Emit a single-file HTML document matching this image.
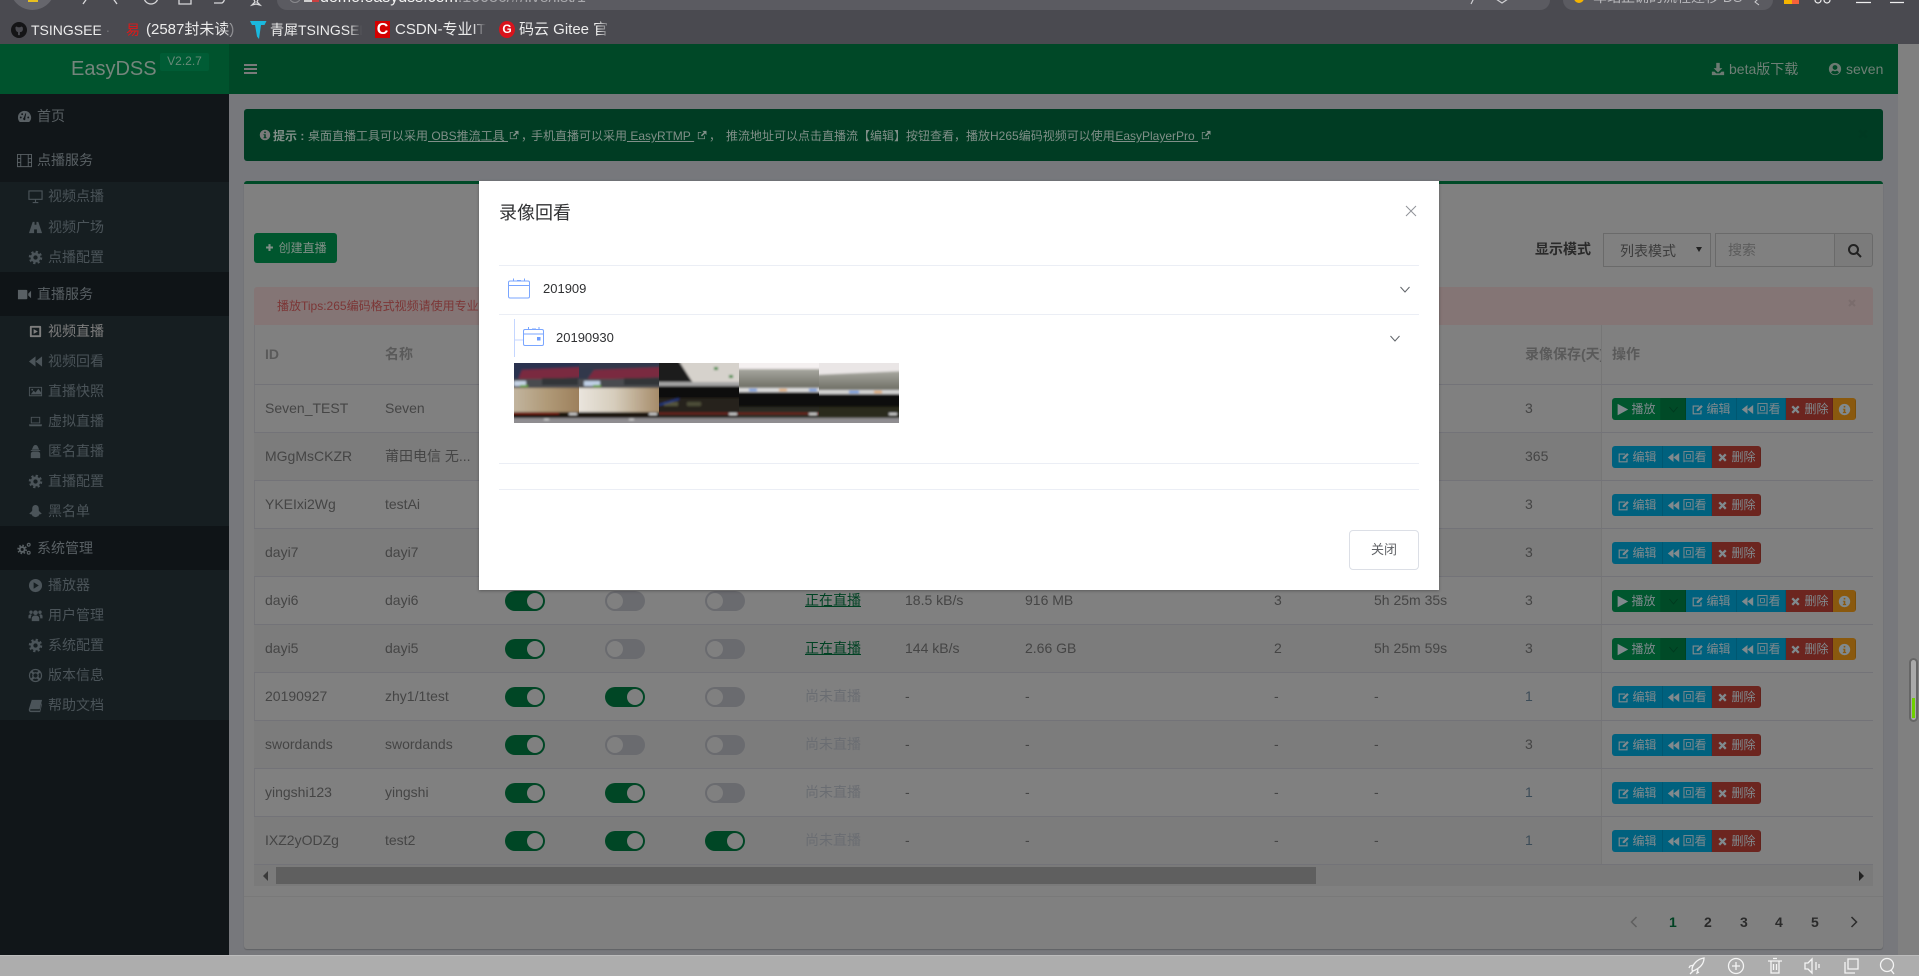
<!DOCTYPE html>
<html lang="zh-CN"><head><meta charset="utf-8"><title>EasyDSS</title>
<style>
*{box-sizing:border-box}
html,body{margin:0;padding:0;width:1919px;height:976px;overflow:hidden;background:#808080;font-family:"Liberation Sans","Noto Sans CJK SC",sans-serif}
.a{position:absolute}
.i{width:14px;height:14px;fill:currentColor;display:inline-block;vertical-align:-2px;flex:none}
#chrome{left:0;top:0;width:1919px;height:44px;background:#4a4a50;overflow:hidden}
.bm{position:absolute;top:20px;height:20px;line-height:20px;font-size:14px;color:#ececec;white-space:nowrap;overflow:hidden;-webkit-mask-image:linear-gradient(90deg,#000 85%,transparent)}
#side{left:0;top:94px;width:229px;height:861px;background:#111619}
.sub{position:absolute;left:0;width:229px;background:#161e21}
.m{position:absolute;white-space:nowrap;font-size:14px;height:30px;line-height:30px}
.m .i{position:absolute;top:8px;width:15px;height:15px}
.t{color:#596064}.s{color:#4b5459}
.r{position:absolute;left:254px;width:1619px;height:48px;border-bottom:1px solid #737378;font-size:14px;color:#454545}
.r.z{background:#7c7c7c}
.c{position:absolute;top:0;line-height:47px;white-space:nowrap}
.tg{position:absolute;top:14px;width:40px;height:20px;border-radius:10px;background:#6a6b6f}
.tg:after{content:"";position:absolute;left:2px;top:2px;width:16px;height:16px;border-radius:50%;background:#808080}
.tg.on{background:#004625}.tg.on:after{left:22px}
.fx{position:absolute;left:1347px;top:0;width:272px;height:47px;background:#808080;border-left:1px solid #767676}
.g{position:absolute;left:10px;top:13px;height:22px;display:flex;border-radius:3px;overflow:hidden;font-size:12px;line-height:22px;color:#808a8e}
.g div{display:flex;align-items:center;justify-content:center;gap:2px;height:22px;border-right:1px solid rgba(0,0,0,.1)}
.g .i{width:13px;height:13px}
.pl{width:49px;background:#00562e}.dd{width:25px;background:#004a27;color:#003a1f}.ed{width:51px;background:#00617e}.bk{width:49px;background:#00617e}.de{width:47px;background:#6c251f}.de2{width:49px;background:#6c251f}.nf{width:23px;background:#8a590e}
.pg{position:absolute;top:912px;font-size:14px;line-height:20px;font-weight:bold;color:#2b2b2b}
.ln{position:absolute;left:499px;width:920px;height:1px;background:#ebeef5}
</style></head><body>
<svg width="0" height="0" style="position:absolute"><defs>
<symbol id="dash" viewBox="0 0 16 16"><path fill-rule="evenodd" d="M8 2a7 7 0 0 0-7 7c0 1.9.7 3.6 2 4.9h10A7 7 0 0 0 8 2zm-4 8a1 1 0 1 1 0-2 1 1 0 0 1 0 2zm1.5-3.5a1 1 0 1 1 0-2 1 1 0 0 1 0 2zM8 12a1.5 1.5 0 0 1-.7-2.8L9 4.5l.8.3-1 5A1.5 1.5 0 0 1 8 12zm4-2a1 1 0 1 1 0-2 1 1 0 0 1 0 2z"/></symbol>
<symbol id="film" viewBox="0 0 16 16"><path fill="none" stroke="currentColor" d="M.5 1.5h15v13H.5zM4 1.5v13M12 1.5v13M.5 6h3.500M.5 10h3.500M12 6h3.500M12 10h3.500"/></symbol>
<symbol id="desk" viewBox="0 0 16 16"><path fill="none" stroke="currentColor" stroke-width="1.2" d="M1 2h14v9H1zM8 11v3M5 14.400h6"/></symbol>
<symbol id="road" viewBox="0 0 16 16"><path d="M5 2h2v3h2V2h2l4 12H9.500v-4h-3v4H1z"/></symbol>
<symbol id="cog" viewBox="0 0 16 16"><circle cx="8" cy="8" r="3.800" fill="none" stroke="currentColor" stroke-width="3"/><circle cx="8" cy="8" r="6" fill="none" stroke="currentColor" stroke-width="2.400" stroke-dasharray="2.400 2.310"/></symbol>
<symbol id="vid" viewBox="0 0 16 16"><path d="M1 3h9a1 1 0 0 1 1 1v8a1 1 0 0 1-1 1H1zM12 7l3-3v8l-3-3z"/></symbol>
<symbol id="psq" viewBox="0 0 16 16"><path fill-rule="evenodd" d="M3 2h10a1 1 0 0 1 1 1v10a1 1 0 0 1-1 1H3a1 1 0 0 1-1-1V3a1 1 0 0 1 1-1zm1 2v8h8V4zM6 5.500l4.500 2.500L6 10.500z"/></symbol>
<symbol id="bk" viewBox="0 0 16 16"><path d="M8 2.500v11L1 8zM15 2.500v11L8 8z"/></symbol>
<symbol id="img" viewBox="0 0 16 16"><path fill-rule="evenodd" d="M1 3h14v10H1zm1 1v8h12V4z"/><path d="M3 11l3-4 2 2 3-4 3 4v2zM4.500 5a1 1 0 1 1 0 2 1 1 0 0 1 0-2z"/></symbol>
<symbol id="lap" viewBox="0 0 16 16"><path fill-rule="evenodd" d="M3 3h10v7H3zm1 1v5h8V4zM1 11h14l-.5 2h-13z"/></symbol>
<symbol id="sec" viewBox="0 0 16 16"><path d="M8 1c1.500 0 2.500 1 3 3l1 2H4l1-2c.5-2 1.500-3 3-3zM3 6.500h10v1H3zM5 8h6a3 3 0 0 1 2 3v4H3v-4a3 3 0 0 1 2-3z"/></symbol>
<symbol id="gh" viewBox="0 0 16 16"><path d="M8 1c2.500 0 3.500 2 3.500 4v2c1 1.500 2 2 3 3 0 .8-1.500 1-2.500 1.200L11 13c-1 0-2 1-3 1s-2-1-3-1l-1-1.800C3 11 1.500 10.800 1.500 10c1-1 2-1.500 3-3V5c0-2 1-4 3.500-4z"/></symbol>
<symbol id="cogs" viewBox="0 0 16 16"><circle cx="5.500" cy="9" r="2.600" fill="none" stroke="currentColor" stroke-width="2"/><circle cx="5.500" cy="9" r="4.300" fill="none" stroke="currentColor" stroke-width="1.800" stroke-dasharray="1.700 1.680"/><circle cx="12.500" cy="4" r="1.500" fill="none" stroke="currentColor" stroke-width="1.300"/><circle cx="12.500" cy="12.500" r="1.500" fill="none" stroke="currentColor" stroke-width="1.300"/></symbol>
<symbol id="pc" viewBox="0 0 16 16"><path fill-rule="evenodd" d="M8 1a7 7 0 1 1 0 14A7 7 0 0 1 8 1zM6 4.500v7l5.500-3.500z"/></symbol>
<symbol id="us" viewBox="0 0 16 16"><circle cx="8" cy="5" r="2.500"/><circle cx="3.200" cy="4.500" r="1.800"/><circle cx="12.800" cy="4.500" r="1.800"/><path d="M4 14v-3c0-2 2-3 4-3s4 1 4 3v3zM.5 11V8.500c0-1 1-1.800 2.500-1.800l1 .7C3 8.500 3 9.500 3 11zM15.500 11V8.500c0-1-1-1.800-2.500-1.800l-1 .7c1 1.100 1 2.100 1 3.600z"/></symbol>
<symbol id="life" viewBox="0 0 16 16"><circle cx="8" cy="8" r="6.400" fill="none" stroke="currentColor" stroke-width="1.300"/><circle cx="8" cy="8" r="2.900" fill="none" stroke="currentColor" stroke-width="1.300"/><path fill="none" stroke="currentColor" stroke-width="2.400" d="M3.500 3.500l2.500 2.500M12.500 3.500L10 6M3.500 12.500L6 10M12.500 12.500L10 10"/></symbol>
<symbol id="book" viewBox="0 0 16 16"><path d="M4 2h11l-2.500 10H3c-.8 0-1 1.500 0 1.500h9.500l2-8 .5 1-2 8.500H3c-2 0-2.500-2-2-3.500z"/></symbol>
<symbol id="inf" viewBox="0 0 16 16"><path fill-rule="evenodd" d="M8 1a7 7 0 1 1 0 14A7 7 0 0 1 8 1zM7 3.500v2h2v-2zM6 7v1.200h1v2.800H6v1.400h4V11H9V7z"/></symbol>
<symbol id="edt" viewBox="0 0 16 16"><path d="M2 3h8v1.400H3.400v8.200h8.200V9H13v5H2zM7 8l5.500-5.500 2 2L9 10H7z"/></symbol>
<symbol id="x" viewBox="0 0 16 16"><path d="M3 5l2-2 3 3 3-3 2 2-3 3 3 3-2 2-3-3-3 3-2-2 3-3z"/></symbol>
<symbol id="dl" viewBox="0 0 16 16"><path d="M6 1h4v6h3l-5 5-5-5h3zM1 11h3l2 2h4l2-2h3v4H1z"/></symbol>
<symbol id="uc" viewBox="0 0 16 16"><path fill-rule="evenodd" d="M8 1a7 7 0 1 1 0 14A7 7 0 0 1 8 1zm0 2.500A2.700 2.700 0 1 0 8 9a2.700 2.700 0 0 0 0-5.500zM3.500 12a5.800 5.800 0 0 0 9 0c-.5-1.500-2-2.200-2.500-2.200a3.400 3.400 0 0 1-4 0c-.5 0-2 .7-2.500 2.200z"/></symbol>
<symbol id="pls" viewBox="0 0 16 16"><path d="M6.500 3h3v3.500H13v3H9.500V13h-3V9.500H3v-3h3.500z"/></symbol>
<symbol id="ext" viewBox="0 0 16 16"><path d="M11 9v3.500H3.500V5H7V4H2.500v9.500H12V9zM8.500 2.500H14V8l-2-2-4 4-1.500-1.500 4-4z"/></symbol>
<symbol id="tri" viewBox="0 0 16 16"><path d="M2 1l13 7-13 7z"/></symbol>
<symbol id="chv" viewBox="0 0 16 16"><path fill="none" stroke="currentColor" d="M3 5l5 6 5-6"/></symbol>
</defs></svg>

<!-- browser chrome -->
<div class="a" id="chrome">
 <div class="a" style="left:10px;top:-35px;width:45px;height:45px;border-radius:50%;background:#66666c"></div>
 <div class="a" style="left:28px;top:-2px;width:10px;height:4px;background:#e8c020"></div>
 <svg class="a" style="left:75px;top:0" width="200" height="12" fill="none" stroke="#d8d8da" stroke-width="1.300">
  <path d="M13 -3L8 4M37 -3L42 4"/><circle cx="76" cy="-3" r="7"/><path d="M104 -3v7h12v-7M139 3h8a4 4 0 0 0 2-5M178 -3l2 5 -3 3 4-1 4 1-3-3 2-5"/></svg>
 <div class="a" style="left:277px;top:-10px;width:1273px;height:20px;border-radius:10px;background:#5b5b61;overflow:hidden">
  <svg class="a" style="left:12px;top:4px" width="14" height="12" fill="none" stroke="#8a8a8e"><circle cx="6" cy="3" r="5.500"/></svg>
  <div class="a" style="left:27px;top:6px;width:8px;height:6px;background:#cfcfcf"></div>
  <div class="a" style="left:35px;top:6px;width:7px;height:6px;background:#c84040"></div>
  <div class="a" style="left:43px;top:0;font-size:16px;line-height:16px;color:#f4f4f4;white-space:nowrap">demo.easydss.com<span style="color:#a8a8ac">:10086/#/live/list/1</span></div>
 </div>
 <svg class="a" style="left:1468px;top:0" width="44" height="6" fill="none" stroke="#cfcfd2" stroke-width="1.200"><path d="M6 -2L3 4M28 -1l6 4 6-4"/></svg>
 <div class="a" style="left:1563px;top:-10px;width:210px;height:20px;border-radius:10px;background:#5b5b61;overflow:hidden">
  <div class="a" style="left:11px;top:6px;width:10px;height:7px;border-radius:0 0 5px 5px;background:#f5b400"></div>
  <div class="a" style="left:30px;top:0;width:150px;font-size:14px;line-height:15px;color:#b8b8bc;white-space:nowrap;overflow:hidden">车站正确的流程迁移 DSS</div>
  <svg class="a" style="left:190px;top:8px" width="10" height="8" fill="none" stroke="#cfcfd2"><path d="M6 0L2 4l4 3"/></svg>
 </div>
 <div class="a" style="left:1784px;top:0;width:8px;height:4px;background:#f5b400"></div>
 <div class="a" style="left:1792px;top:0;width:7px;height:4px;background:#f5613a"></div>
 <svg class="a" style="left:1810px;top:0" width="100" height="6" fill="none" stroke="#eee" stroke-width="1.200"><circle cx="8" cy="0" r="3"/><circle cx="17" cy="0" r="3"/><path d="M46 2.500h15M80 2.500h14"/></svg>
 <svg class="a" style="left:10px;top:21px" width="18" height="18"><circle cx="9" cy="9" r="8" fill="#141416"/><path d="M5.500 6l1.300-.5 1 .8h2.400l1-.8 1.300.5c.7 1.500.6 3.500-.6 4.500-.5.4-1.200.6-2 .6v3H8v-3c-1.700-.3-2.800-2.500-2.500-5z" fill="#4a4a50"/></svg>
 <div class="bm" style="left:31px;width:80px">TSINGSEE ·</div>
 <div class="bm" style="left:126px;width:18px;color:#e01818;font-size:14px;-webkit-mask-image:none">易</div>
 <div class="bm" style="left:146px;width:92px;font-size:15px">(2587封未读)</div>
 <svg class="a" style="left:250px;top:20px" width="17" height="20"><path d="M0 1h16.500l-2 4h-3.500l-2 14-2-2.500L5 5H2z" fill="#1ab8de"/></svg>
 <div class="bm" style="left:270px;width:92px">青犀TSINGSEE</div>
 <div class="a" style="left:375px;top:21px;width:15px;height:17px;background:#d40000;color:#fff;font:bold 16px/17px 'Liberation Sans',sans-serif;text-align:center">C</div>
 <div class="bm" style="left:395px;width:91px;font-size:15px">CSDN-专业IT</div>
 <div class="a" style="left:499px;top:21px;width:16px;height:17px;border-radius:50%;background:#d8131c;color:#fff;font:bold 12px/17px 'Liberation Sans',sans-serif;text-align:center">G</div>
 <div class="bm" style="left:519px;width:92px;font-size:15px">码云 Gitee 官</div>
</div>

<!-- header -->
<div class="a" style="left:0;top:44px;width:229px;height:50px;background:#00532d"></div>
<div class="a" style="left:229px;top:44px;width:1669px;height:50px;background:#004827"></div>
<div class="a" style="left:71px;top:57px;font-size:20px;line-height:24px;color:#75857c">EasyDSS</div>
<div class="a" style="left:160px;top:53px;width:49px;height:18px;border-radius:2px;background:#005c35;color:#688a78;font-size:12px;line-height:16px;text-align:center">V2.2.7</div>
<div class="a" style="left:244px;top:64px;width:13px;height:2px;background:#7a7a7a"></div>
<div class="a" style="left:244px;top:68px;width:13px;height:2px;background:#7a7a7a"></div>
<div class="a" style="left:244px;top:72px;width:13px;height:2px;background:#7a7a7a"></div>
<svg class="i a" style="left:1711px;top:62px;color:#6c7a72"><use href="#dl"/></svg>
<div class="a" style="left:1729px;top:60px;font-size:14px;line-height:18px;color:#6f7f76">beta版下载</div>
<svg class="i a" style="left:1828px;top:62px;color:#6c7a72"><use href="#uc"/></svg>
<div class="a" style="left:1846px;top:60px;font-size:14px;line-height:18px;color:#6f7f76">seven</div>

<!-- sidebar -->
<div class="a" id="side">
 <div class="sub" style="top:88px;height:90px"></div>
 <div class="sub" style="top:222px;height:210px"></div>
 <div class="sub" style="top:476px;height:150px"></div>
 <div class="a" style="left:0;top:0;width:229px;height:88px;background:#111619"></div>
 <div class="a" style="left:0;top:178px;width:229px;height:44px;background:#0f1417"></div>
 <div class="a" style="left:0;top:432px;width:229px;height:44px;background:#0f1417"></div>
</div>
<div class="a" style="left:0;top:0">
<div class="m t" style="left:37px;top:101px"><svg class="i" style="left:-20px"><use href="#dash"/></svg>首页</div>
<div class="m t" style="left:37px;top:145px"><svg class="i" style="left:-20px"><use href="#film"/></svg>点播服务</div>
<div class="m s" style="left:48px;top:181px"><svg class="i" style="left:-20px"><use href="#desk"/></svg>视频点播</div>
<div class="m s" style="left:48px;top:212px"><svg class="i" style="left:-20px"><use href="#road"/></svg>视频广场</div>
<div class="m s" style="left:48px;top:242px"><svg class="i" style="left:-20px"><use href="#cog"/></svg>点播配置</div>
<div class="m t" style="left:37px;top:279px"><svg class="i" style="left:-20px"><use href="#vid"/></svg>直播服务</div>
<div class="m" style="left:48px;top:316px;color:#7e7e7e"><svg class="i" style="left:-20px"><use href="#psq"/></svg>视频直播</div>
<div class="m s" style="left:48px;top:346px"><svg class="i" style="left:-20px"><use href="#bk"/></svg>视频回看</div>
<div class="m s" style="left:48px;top:376px"><svg class="i" style="left:-20px"><use href="#img"/></svg>直播快照</div>
<div class="m s" style="left:48px;top:406px"><svg class="i" style="left:-20px"><use href="#lap"/></svg>虚拟直播</div>
<div class="m s" style="left:48px;top:436px"><svg class="i" style="left:-20px"><use href="#sec"/></svg>匿名直播</div>
<div class="m s" style="left:48px;top:466px"><svg class="i" style="left:-20px"><use href="#cog"/></svg>直播配置</div>
<div class="m s" style="left:48px;top:496px"><svg class="i" style="left:-20px"><use href="#gh"/></svg>黑名单</div>
<div class="m t" style="left:37px;top:533px"><svg class="i" style="left:-20px"><use href="#cogs"/></svg>系统管理</div>
<div class="m s" style="left:48px;top:570px"><svg class="i" style="left:-20px"><use href="#pc"/></svg>播放器</div>
<div class="m s" style="left:48px;top:600px"><svg class="i" style="left:-20px"><use href="#us"/></svg>用户管理</div>
<div class="m s" style="left:48px;top:630px"><svg class="i" style="left:-20px"><use href="#cog"/></svg>系统配置</div>
<div class="m s" style="left:48px;top:660px"><svg class="i" style="left:-20px"><use href="#life"/></svg>版本信息</div>
<div class="m s" style="left:48px;top:690px"><svg class="i" style="left:-20px"><use href="#book"/></svg>帮助文档</div>
</div>

<!-- content background -->
<div class="a" style="left:229px;top:94px;width:1669px;height:861px;background:#77787c"></div>
<div class="a" style="left:1898px;top:44px;width:21px;height:911px;background:#808080"></div>
<div class="a" style="left:1909px;top:658px;width:9px;height:64px;border:2px solid #666;border-radius:5px;background:#aaa"></div>
<div class="a" style="left:1912px;top:698px;width:3px;height:20px;background:#6fd000"></div>

<!-- alert -->
<div class="a" style="left:244px;top:109px;width:1639px;height:52px;border-radius:3px;background:#003c23"></div>
<div class="a" style="left:0;top:127px;font-size:12px;line-height:18px;color:#808f88;white-space:nowrap">
 <svg class="i a" style="left:259px;top:2px;width:12px;height:12px;color:#7a7a7a"><use href="#inf"/></svg>
 <b class="a" style="left:273px;top:0;white-space:nowrap">提示 :</b>
 <span class="a" style="left:308px;top:0">桌面直播工具可以采用</span>
 <u class="a" style="left:428px;top:0">&nbsp;OBS推流工具&nbsp;</u>
 <svg class="i a" style="left:508px;top:2px;width:12px;height:12px"><use href="#ext"/></svg>
 <span class="a" style="left:521px;top:0">，</span>
 <span class="a" style="left:531px;top:0">手机直播可以采用</span>
 <u class="a" style="left:627px;top:0">&nbsp;EasyRTMP&nbsp;</u>
 <svg class="i a" style="left:696px;top:2px;width:12px;height:12px"><use href="#ext"/></svg>
 <span class="a" style="left:709px;top:0">，</span>
 <span class="a" style="left:726px;top:0">推流地址可以点击直播流【编辑】按钮查看，</span>
 <span class="a" style="left:966px;top:0">播放H265编码视频可以使用</span>
 <u class="a" style="left:1112px;top:0">&nbsp;EasyPlayerPro&nbsp;</u>
 <svg class="i a" style="left:1200px;top:2px;width:12px;height:12px"><use href="#ext"/></svg>
</div>
<svg class="i a" style="left:1856px;top:127px;color:#003a22"><use href="#x"/></svg>

<!-- box -->
<div class="a" style="left:244px;top:181px;width:1639px;height:768px;background:#808080;border-top:3px solid #004a27;border-radius:3px;box-shadow:0 1px 1px rgba(0,0,0,.2)"></div>
<div class="a" style="left:254px;top:233px;width:83px;height:30px;border-radius:3px;background:#00562e;color:#829088;font-size:12px;line-height:30px;text-align:center"><svg class="i" style="width:11px;height:11px;vertical-align:-1px"><use href="#pls"/></svg> 创建直播</div>
<div class="a" style="left:1535px;top:239px;font-size:14px;line-height:20px;font-weight:bold;color:#2a2a2a">显示模式</div>
<div class="a" style="left:1603px;top:233px;width:108px;height:34px;border:1px solid #6a6a6a;background:#808080;color:#3c3c3c;font-size:14px;line-height:34px;padding-left:16px">列表模式</div>
<div class="a" style="left:1696px;top:247px;width:0;height:0;border:3px solid transparent;border-top:5px solid #222"></div>
<div class="a" style="left:1715px;top:233px;width:120px;height:34px;border:1px solid #6a6a6a;color:#5c5c5c;font-size:14px;line-height:32px;padding-left:12px">搜索</div>
<div class="a" style="left:1835px;top:233px;width:38px;height:34px;border:1px solid #6a6a6a;border-left:0;background:#7b7b7b;border-radius:0 3px 3px 0"></div>
<svg class="a" style="left:1847px;top:243px" width="15" height="15" fill="none" stroke="#222" stroke-width="2"><circle cx="6.500" cy="6.500" r="4.500"/><path d="M10 10l4 4"/></svg>
<div class="a" style="left:254px;top:287px;width:1619px;height:38px;border-radius:3px 3px 0 0;background:#847575"></div>
<div class="a" style="left:277px;top:298px;font-size:12px;line-height:16px;color:#7c3636;white-space:nowrap">播放Tips:265编码格式视频请使用专业版</div>
<svg class="i a" style="left:1846px;top:297px;width:12px;height:12px;color:#7a6c6c"><use href="#x"/></svg>

<!-- table -->
<div class="a" style="left:254px;top:325px;width:1619px;height:60px;border:1px solid #767679;border-bottom:1px solid #737378;border-top:0;background:#808080;font-size:14px;font-weight:bold;color:#5a5a5a;line-height:58px">
 <span class="a" style="left:10px;top:0">ID</span><span class="a" style="left:130px;top:0">名称</span>
 <span class="a" style="left:1270px;top:0;width:76px;overflow:hidden;white-space:nowrap">录像保存(天)</span>
 <div class="a" style="left:1346px;top:0;width:272px;height:59px;border-left:1px solid #767676;padding-left:10px;background:#808080">操作</div>
</div>
<div class="a" style="left:254px;top:385px;width:1px;height:480px;background:#767679"></div>
<div class="a" style="left:1872px;top:385px;width:1px;height:480px;background:#767679"></div>

<div class="r" style="top:385px"><span class="c" style="left:11px">Seven_TEST</span><span class="c" style="left:131px">Seven</span><span class="c" style="left:1271px">3</span>
 <div class="fx"><div class="g"><div class="pl"><svg class="i"><use href="#tri"/></svg>播放</div><div class="dd"><svg class="i"><use href="#chv"/></svg></div><div class="ed"><svg class="i"><use href="#edt"/></svg>编辑</div><div class="bk"><svg class="i"><use href="#bk"/></svg>回看</div><div class="de"><svg class="i"><use href="#x"/></svg>删除</div><div class="nf"><svg class="i"><use href="#inf"/></svg></div></div></div></div>
<div class="r z" style="top:433px"><span class="c" style="left:11px">MGgMsCKZR</span><span class="c" style="left:131px">莆田电信 无...</span><span class="c" style="left:1271px">365</span>
 <div class="fx"><div class="g"><div class="ed"><svg class="i"><use href="#edt"/></svg>编辑</div><div class="bk"><svg class="i"><use href="#bk"/></svg>回看</div><div class="de2"><svg class="i"><use href="#x"/></svg>删除</div></div></div></div>
<div class="r" style="top:481px"><span class="c" style="left:11px">YKEIxi2Wg</span><span class="c" style="left:131px">testAi</span><span class="c" style="left:1271px">3</span>
 <div class="fx"><div class="g"><div class="ed"><svg class="i"><use href="#edt"/></svg>编辑</div><div class="bk"><svg class="i"><use href="#bk"/></svg>回看</div><div class="de2"><svg class="i"><use href="#x"/></svg>删除</div></div></div></div>
<div class="r z" style="top:529px"><span class="c" style="left:11px">dayi7</span><span class="c" style="left:131px">dayi7</span><span class="c" style="left:1271px">3</span>
 <div class="fx"><div class="g"><div class="ed"><svg class="i"><use href="#edt"/></svg>编辑</div><div class="bk"><svg class="i"><use href="#bk"/></svg>回看</div><div class="de2"><svg class="i"><use href="#x"/></svg>删除</div></div></div></div>
<div class="r" style="top:577px"><span class="c" style="left:11px">dayi6</span><span class="c" style="left:131px">dayi6</span><span class="tg on" style="left:251px"></span><span class="tg" style="left:351px"></span><span class="tg" style="left:451px"></span><u class="c" style="left:551px;color:#004223">正在直播</u><span class="c" style="left:651px">18.5 kB/s</span><span class="c" style="left:771px">916 MB</span><span class="c" style="left:1020px">3</span><span class="c" style="left:1120px">5h 25m 35s</span><span class="c" style="left:1271px">3</span>
 <div class="fx"><div class="g"><div class="pl"><svg class="i"><use href="#tri"/></svg>播放</div><div class="dd"><svg class="i"><use href="#chv"/></svg></div><div class="ed"><svg class="i"><use href="#edt"/></svg>编辑</div><div class="bk"><svg class="i"><use href="#bk"/></svg>回看</div><div class="de"><svg class="i"><use href="#x"/></svg>删除</div><div class="nf"><svg class="i"><use href="#inf"/></svg></div></div></div></div>
<div class="r z" style="top:625px"><span class="c" style="left:11px">dayi5</span><span class="c" style="left:131px">dayi5</span><span class="tg on" style="left:251px"></span><span class="tg" style="left:351px"></span><span class="tg" style="left:451px"></span><u class="c" style="left:551px;color:#004223">正在直播</u><span class="c" style="left:651px">144 kB/s</span><span class="c" style="left:771px">2.66 GB</span><span class="c" style="left:1020px">2</span><span class="c" style="left:1120px">5h 25m 59s</span><span class="c" style="left:1271px">3</span>
 <div class="fx"><div class="g"><div class="pl"><svg class="i"><use href="#tri"/></svg>播放</div><div class="dd"><svg class="i"><use href="#chv"/></svg></div><div class="ed"><svg class="i"><use href="#edt"/></svg>编辑</div><div class="bk"><svg class="i"><use href="#bk"/></svg>回看</div><div class="de"><svg class="i"><use href="#x"/></svg>删除</div><div class="nf"><svg class="i"><use href="#inf"/></svg></div></div></div></div>
<div class="r" style="top:673px"><span class="c" style="left:11px">20190927</span><span class="c" style="left:131px">zhy1/1test</span><span class="tg on" style="left:251px"></span><span class="tg on" style="left:351px"></span><span class="tg" style="left:451px"></span><span class="c" style="left:551px;color:#6a6d72">尚未直播</span><span class="c" style="left:651px">-</span><span class="c" style="left:771px">-</span><span class="c" style="left:1020px">-</span><span class="c" style="left:1120px">-</span><span class="c" style="left:1271px;color:#3c4c58">1</span>
 <div class="fx"><div class="g"><div class="ed"><svg class="i"><use href="#edt"/></svg>编辑</div><div class="bk"><svg class="i"><use href="#bk"/></svg>回看</div><div class="de2"><svg class="i"><use href="#x"/></svg>删除</div></div></div></div>
<div class="r z" style="top:721px"><span class="c" style="left:11px">swordands</span><span class="c" style="left:131px">swordands</span><span class="tg on" style="left:251px"></span><span class="tg" style="left:351px"></span><span class="tg" style="left:451px"></span><span class="c" style="left:551px;color:#6a6d72">尚未直播</span><span class="c" style="left:651px">-</span><span class="c" style="left:771px">-</span><span class="c" style="left:1020px">-</span><span class="c" style="left:1120px">-</span><span class="c" style="left:1271px">3</span>
 <div class="fx"><div class="g"><div class="ed"><svg class="i"><use href="#edt"/></svg>编辑</div><div class="bk"><svg class="i"><use href="#bk"/></svg>回看</div><div class="de2"><svg class="i"><use href="#x"/></svg>删除</div></div></div></div>
<div class="r" style="top:769px"><span class="c" style="left:11px">yingshi123</span><span class="c" style="left:131px">yingshi</span><span class="tg on" style="left:251px"></span><span class="tg on" style="left:351px"></span><span class="tg" style="left:451px"></span><span class="c" style="left:551px;color:#6a6d72">尚未直播</span><span class="c" style="left:651px">-</span><span class="c" style="left:771px">-</span><span class="c" style="left:1020px">-</span><span class="c" style="left:1120px">-</span><span class="c" style="left:1271px;color:#3c4c58">1</span>
 <div class="fx"><div class="g"><div class="ed"><svg class="i"><use href="#edt"/></svg>编辑</div><div class="bk"><svg class="i"><use href="#bk"/></svg>回看</div><div class="de2"><svg class="i"><use href="#x"/></svg>删除</div></div></div></div>
<div class="r z" style="top:817px"><span class="c" style="left:11px">IXZ2yODZg</span><span class="c" style="left:131px">test2</span><span class="tg on" style="left:251px"></span><span class="tg on" style="left:351px"></span><span class="tg on" style="left:451px"></span><span class="c" style="left:551px;color:#6a6d72">尚未直播</span><span class="c" style="left:651px">-</span><span class="c" style="left:771px">-</span><span class="c" style="left:1020px">-</span><span class="c" style="left:1120px">-</span><span class="c" style="left:1271px;color:#3c4c58">1</span>
 <div class="fx"><div class="g"><div class="ed"><svg class="i"><use href="#edt"/></svg>编辑</div><div class="bk"><svg class="i"><use href="#bk"/></svg>回看</div><div class="de2"><svg class="i"><use href="#x"/></svg>删除</div></div></div></div>

<!-- h-scroll -->
<div class="a" style="left:254px;top:865px;width:1619px;height:21px;background:#7a7a7a"></div>
<div class="a" style="left:276px;top:867px;width:1040px;height:17px;background:#5f5f5f"></div>
<div class="a" style="left:263px;top:871px;width:0;height:0;border:5px solid transparent;border-left:0;border-right:5px solid #3a3a3a"></div>
<div class="a" style="left:1859px;top:871px;width:0;height:0;border:5px solid transparent;border-right:0;border-left:5px solid #222"></div>
<div class="a" style="left:244px;top:896px;width:1639px;height:1px;background:#797979"></div>

<!-- pager -->
<svg class="a" style="left:1630px;top:915px" width="8" height="14" fill="none" stroke="#5f5f5f" stroke-width="1.500"><path d="M6.500 2L1.500 7l5 5"/></svg>
<span class="pg" style="left:1669px;color:#004223">1</span><span class="pg" style="left:1704px">2</span><span class="pg" style="left:1740px">3</span><span class="pg" style="left:1775px">4</span><span class="pg" style="left:1811px">5</span>
<svg class="a" style="left:1850px;top:915px" width="8" height="14" fill="none" stroke="#2b2b2b" stroke-width="1.500"><path d="M1.500 2l5 5-5 5"/></svg>

<!-- modal -->
<div class="a" style="left:479px;top:181px;width:960px;height:409px;background:#fff;box-shadow:0 1px 3px rgba(0,0,0,.3)"></div>
<div class="a" style="left:499px;top:201px;font-size:18px;line-height:24px;color:#303133">录像回看</div>
<svg class="a" style="left:1405px;top:205px" width="12" height="12" stroke="#909399" fill="none"><path d="M1 1l10 10M11 1L1 11"/></svg>
<div class="ln" style="top:265px"></div><div class="ln" style="top:314px"></div><div class="ln" style="top:463px"></div><div class="ln" style="top:489px"></div>
<svg class="a" style="left:508px;top:278px" width="23" height="21" fill="none" stroke="#7aa6ff" stroke-width="1"><rect x=".5" y="3" width="21" height="17" rx="1.500"/><path d="M1 7.500h20M5.500 .5v3M16.500 .5v3M9 2.500h4"/></svg>
<div class="a" style="left:543px;top:280px;font-size:13px;line-height:18px;color:#303133">201909</div>
<svg class="a" style="left:1400px;top:286px" width="10" height="7" fill="none" stroke="#5f6368"><path d="M.5 1l4.500 5 4.500-5"/></svg>
<svg class="a" style="left:513px;top:319px" width="32" height="38" fill="none" stroke="#c4d6ff"><path d="M1.500 0v38M1.500 21h9"/><g stroke="#7aa6ff"><rect x="10.500" y="12.500" width="20" height="16" rx="1.500" fill="#fff" transform="translate(0 -2)"/><path d="M11 15h19M15.500 8v3M26 8v3M19 10h4"/></g><rect x="24" y="18" width="3.500" height="3.500" fill="#6c9cff" stroke="none"/></svg>
<div class="a" style="left:556px;top:329px;font-size:13px;line-height:18px;color:#303133">20190930</div>
<svg class="a" style="left:1390px;top:335px" width="10" height="7" fill="none" stroke="#5f6368"><path d="M.5 1l4.500 5 4.500-5"/></svg>

<svg class="a" style="left:514px;top:363px" width="385" height="60">
<defs>
<filter id="bl" x="-5%" y="-5%" width="110%" height="110%"><feGaussianBlur stdDeviation="1"/></filter>
<linearGradient id="w1" x1="0" x2="1" y1="0" y2="0"><stop offset="0" stop-color="#c4b8a4"/><stop offset=".5" stop-color="#b09a78"/><stop offset="1" stop-color="#9a7c58"/></linearGradient>
<linearGradient id="w2" x1="0" x2="1" y1="0" y2="0"><stop offset="0" stop-color="#ece8e2"/><stop offset=".45" stop-color="#d6cdbc"/><stop offset="1" stop-color="#a08460"/></linearGradient>
<linearGradient id="g4" x1="0" x2="0" y1="0" y2="1"><stop offset="0" stop-color="#a8a8a0"/><stop offset="1" stop-color="#6c6c62"/></linearGradient>
</defs>
<svg x="0" width="65" height="60"><g filter="url(#bl)">
 <rect x="-5" y="-5" width="75" height="75" fill="#2b3150"/><path d="M8 7L70 4V14L4 17z" fill="#7a2a40"/><rect x="-5" y="16" width="75" height="10" fill="#4a4c50"/><rect x="28" y="15" width="36" height="7" fill="#333538"/><rect x="0" y="18" width="12" height="5" fill="#c6d4e6"/><rect x="6" y="22" width="8" height="2" fill="#6aa838"/><rect x="-5" y="25" width="75" height="25" fill="url(#w1)"/><rect x="-5" y="49" width="75" height="6" fill="#1c1210"/><rect x="-5" y="50" width="50" height="1" fill="#a02018"/><rect x="55" y="50" width="8" height="2" fill="#d8d8d8"/><rect x="-5" y="55" width="75" height="10" fill="#8f8d90"/><rect x="30" y="56" width="5" height="1" fill="#eee"/>
</g></svg>
<svg x="65" width="80" height="60"><g filter="url(#bl)">
 <rect x="-5" y="-5" width="90" height="75" fill="#33384c"/><path d="M15 7L85 4V14L8 17z" fill="#7a2a40"/><rect x="-5" y="16" width="90" height="10" fill="#4a4c50"/><rect x="45" y="15" width="38" height="7" fill="#333538"/><rect x="5" y="18" width="16" height="5" fill="#c0d0e6"/><rect x="14" y="22" width="8" height="2" fill="#6aa838"/><rect x="-5" y="25" width="90" height="25" fill="url(#w2)"/><rect x="-5" y="49" width="90" height="6" fill="#1a1210"/><rect x="70" y="50" width="8" height="2" fill="#d8d8d8"/><rect x="-5" y="55" width="90" height="10" fill="#8f8d90"/><rect x="50" y="56" width="5" height="1" fill="#eee"/>
</g></svg>
<svg x="145" width="80" height="60"><g filter="url(#bl)">
 <rect x="-5" y="-5" width="90" height="30" fill="#1e1e1e"/><path d="M18 -5H85V20H34z" fill="#d6d2cc"/><rect x="-5" y="19" width="90" height="4" fill="#a4a4a4"/><rect x="-5" y="23" width="90" height="13" fill="#101010"/><rect x="-5" y="35" width="90" height="20" fill="#26241a"/><rect x="5" y="39" width="14" height="4" fill="#54543c"/><rect x="28" y="39" width="14" height="4" fill="#4e4e38"/><path d="M0 42L20 36" stroke="#1c3a8c" stroke-width="1.500"/><rect x="-5" y="50" width="90" height="1" fill="#8a1c14"/><rect x="70" y="50" width="8" height="2" fill="#d8d8d8"/><rect x="-5" y="55" width="90" height="10" fill="#8f8d90"/><rect x="55" y="4" width="4" height="3" fill="#3c8c3c"/><rect x="70" y="12" width="4" height="3" fill="#3c8c3c"/>
</g></svg>
<svg x="225" width="80" height="60"><g filter="url(#bl)">
 <rect x="-5" y="-5" width="90" height="11" fill="#f4f0f0"/><rect x="-5" y="6" width="90" height="20" fill="url(#g4)"/><rect x="-5" y="25" width="90" height="4" fill="#dcdcdc"/><rect x="10" y="26" width="8" height="2" fill="#4488dd"/><rect x="40" y="26" width="8" height="2" fill="#e0a050"/><rect x="70" y="26" width="8" height="2" fill="#4488dd"/><rect x="-5" y="29" width="90" height="15" fill="#0e0e0e"/><rect x="-5" y="44" width="90" height="11" fill="#2b2b20"/><rect x="-5" y="50" width="90" height="1" fill="#8a1c14"/><rect x="70" y="50" width="8" height="2" fill="#d8d8d8"/><rect x="-5" y="55" width="90" height="10" fill="#8f8d90"/>
</g></svg>
<svg x="305" width="80" height="60"><g filter="url(#bl)">
 <path d="M-5 -5H85V8L-5 12z" fill="#eae6e6"/><path d="M-5 12L85 8V28H-5z" fill="url(#g4)"/><rect x="-5" y="27" width="90" height="4" fill="#d4d4d4"/><rect x="30" y="28" width="10" height="2" fill="#4488dd"/><rect x="55" y="28" width="8" height="2" fill="#e0a050"/><rect x="-5" y="31" width="90" height="13" fill="#0e0e0e"/><rect x="-5" y="44" width="90" height="11" fill="#29291f"/><rect x="70" y="50" width="8" height="2" fill="#d8d8d8"/><rect x="-5" y="55" width="90" height="10" fill="#8f8d90"/>
</g></svg>
</svg>

<div class="a" style="left:1349px;top:530px;width:70px;height:40px;border:1px solid #dcdfe6;border-radius:4px;background:#fff;color:#606266;font-size:13px;line-height:38px;text-align:center">关闭</div>

<!-- bottom bar -->
<div class="a" style="left:0;top:955px;width:1919px;height:21px;background:#adadad;border-top:1px solid #bcbcbc"></div>
<svg class="a" style="left:1685px;top:957px" width="220" height="18" fill="none" stroke="#f4f4f4" stroke-width="1.300">
 <path d="M7 13c0-5 5-11 12-12 0 7-6 11-11 13zM9 8l-4 1-1 2M13 12l-1 4 2-1M5 17l3-3"/>
 <circle cx="51" cy="9" r="7.500"/><path d="M47 9h8M51 5v8"/>
 <path d="M83 4h14M86 4v12h8V4M88 1.500h4M88.500 7v6M91.500 7v6"/>
 <path d="M120 6v6h3l4 4V2l-4 4zM131 5v8M134 7v4"/>
 <path d="M160 5v11h10M163 2h10v10h-10z"/>
 <circle cx="202" cy="8" r="6.500"/><path d="M206 13l3 4"/>
</svg>
</body></html>
